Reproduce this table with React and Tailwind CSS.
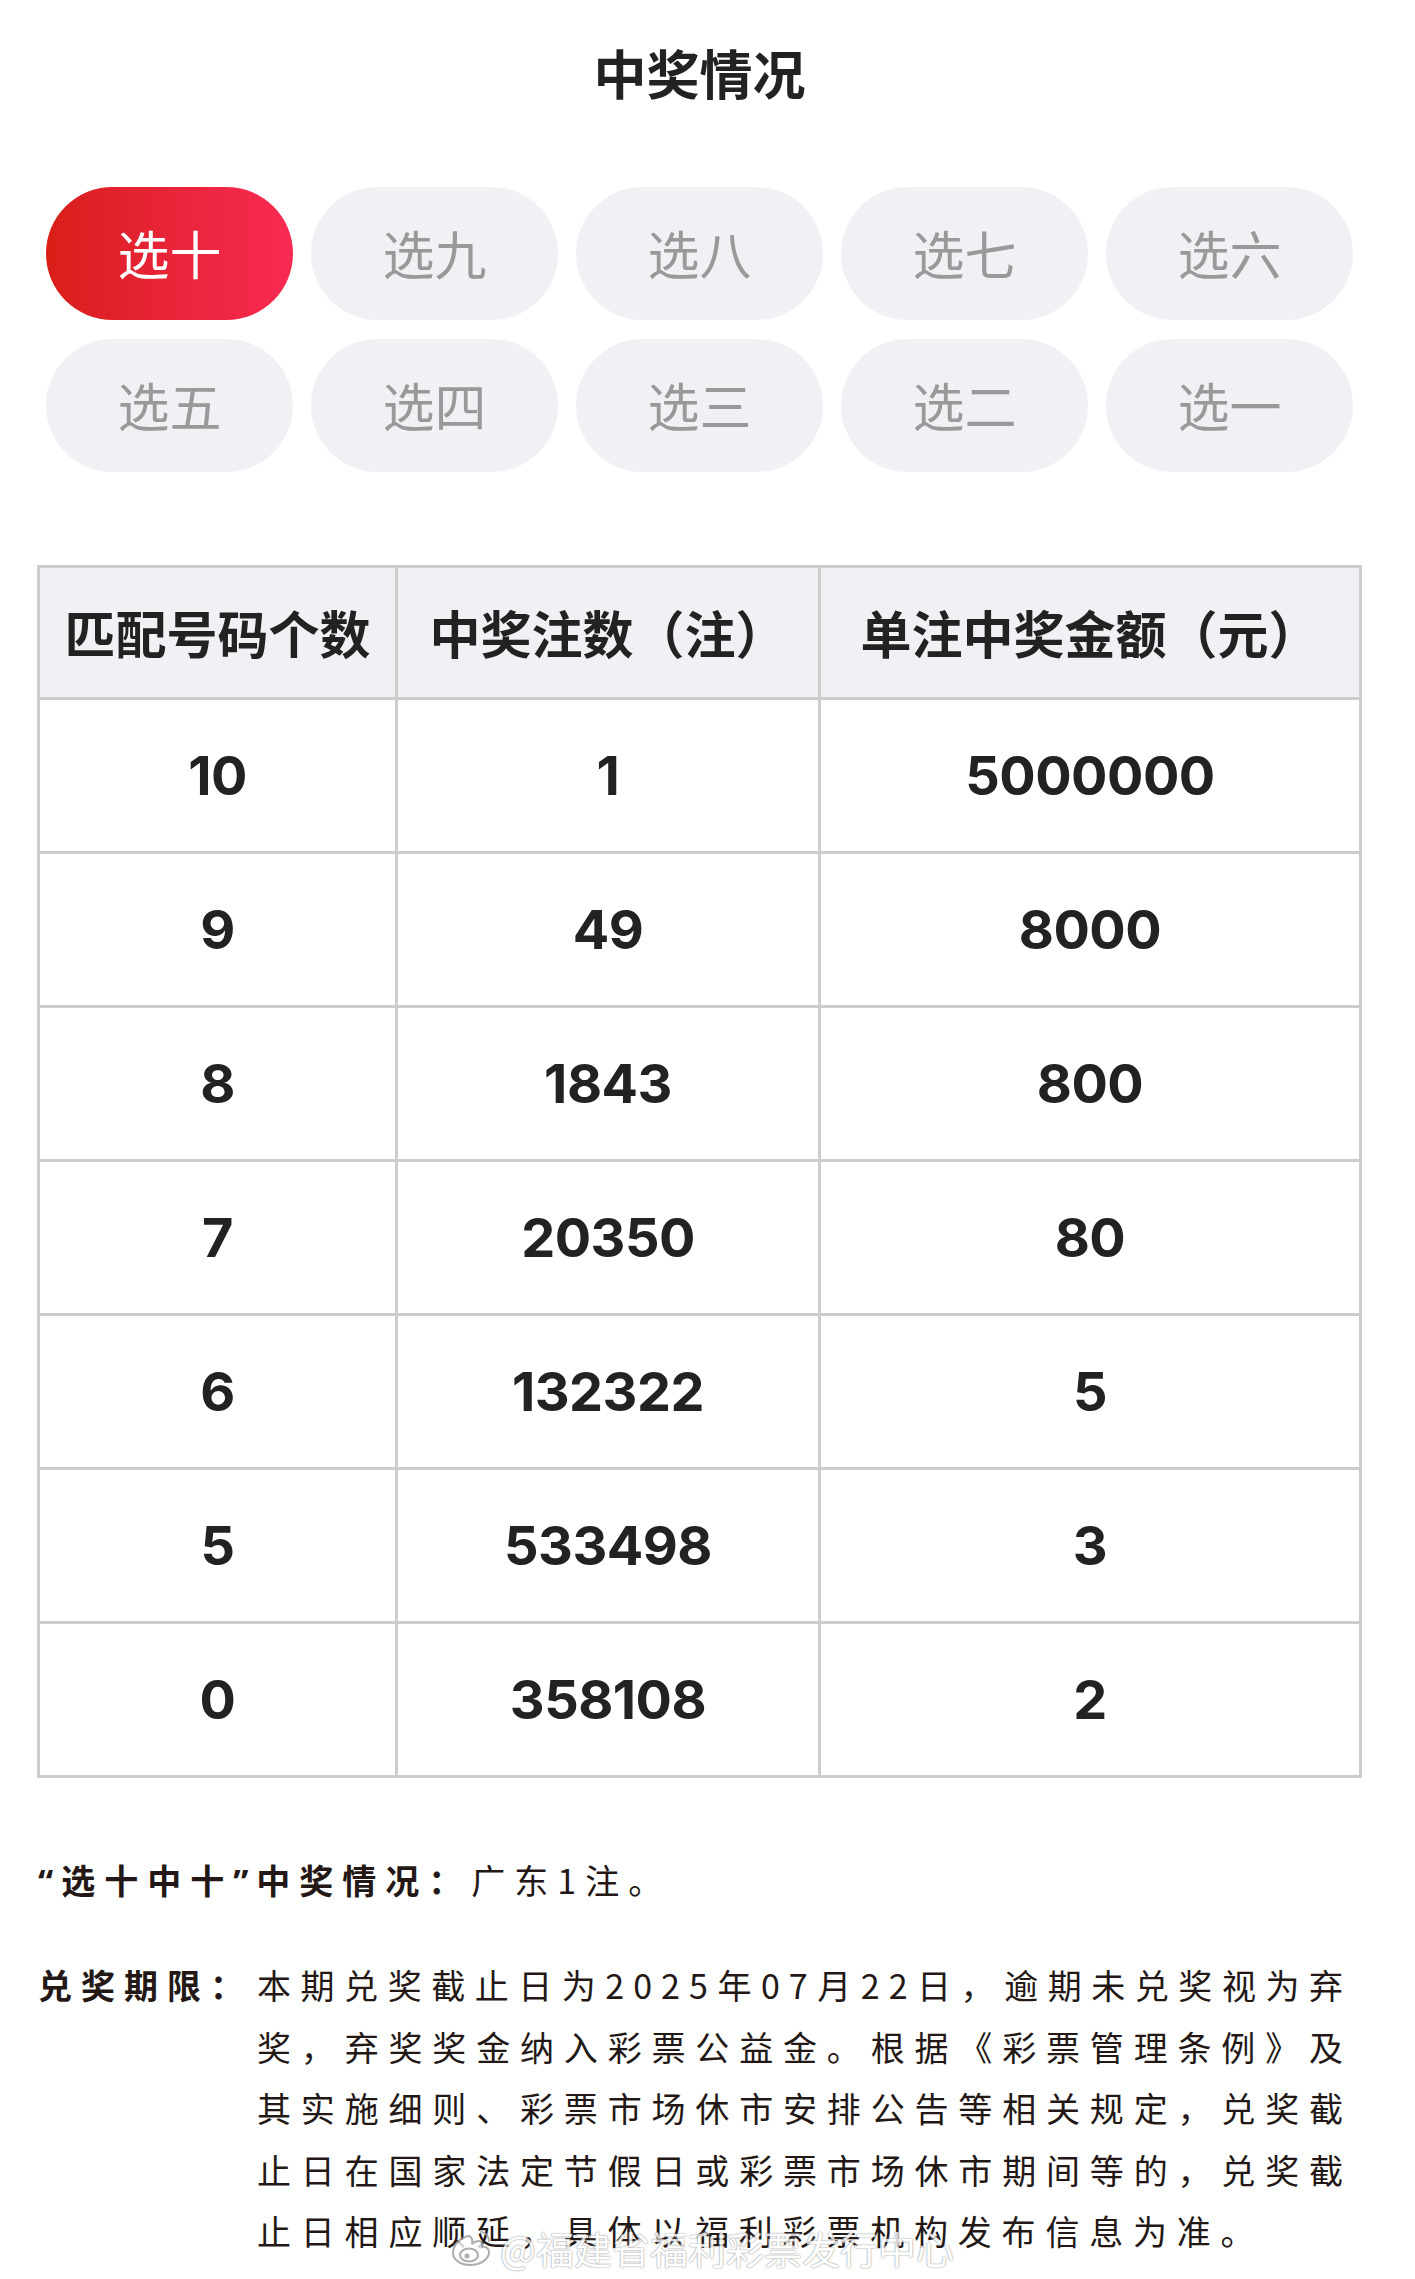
import React from "react";

const tabs = ["选十", "选九", "选八", "选七", "选六", "选五", "选四", "选三", "选二", "选一"];
const rows = [
  ["10", "1", "5000000"],
  ["9", "49", "8000"],
  ["8", "1843", "800"],
  ["7", "20350", "80"],
  ["6", "132322", "5"],
  ["5", "533498", "3"],
  ["0", "358108", "2"],
];

const cjk = "font-['Noto_Sans_CJK_SC','Noto_Sans',sans-serif]";

export default function App() {
  return (
    <div className={`relative w-[1415px] min-h-[2279px] bg-white text-[#222] ${cjk}`}>
      <div className="w-[1399px]">
        <div className="pt-[44px] text-center text-[53px] leading-[56px] font-bold text-[#222]">中奖情况</div>

        <div className="ml-[46px] mt-[87px] grid w-[1307px] grid-cols-5 gap-x-[18px] gap-y-[19px]">
          {tabs.map((t, i) => (
            <div
              key={t}
              className={
                i === 0
                  ? "flex h-[133px] items-center justify-center rounded-full bg-gradient-to-r from-[#d81e16] to-[#f92a52] pb-[2px] text-[52px] text-white"
                  : "flex h-[133px] items-center justify-center rounded-full bg-[#f1f1f5] pb-[2px] text-[52px] text-[#999999]"
              }
            >
              {t}
            </div>
          ))}
        </div>

        <div className="ml-[37px] mt-[93px] grid w-[1325px] grid-cols-[355px_420px_538px] gap-[3px] bg-[#cdcdcd] p-[3px]">
          {["匹配号码个数", "中奖注数（注）", "单注中奖金额（元）"].map((h) => (
            <div key={h} className="flex h-[129px] items-center justify-center bg-[#f1f1f5] text-[51px] font-bold text-[#222]">
              {h}
            </div>
          ))}
          {rows.map((r) =>
            r.map((c, j) => (
              <div
                key={r[0] + "-" + j}
                className="flex h-[151px] items-center justify-center bg-white font-['Inter',sans-serif] text-[54px] font-bold tracking-[-0.5px] text-[#222]"
              >
                {c}
              </div>
            ))
          )}
        </div>

        <div className="ml-[38px] mt-[71px] text-[34px] leading-[61px] tracking-[9px] text-[#231815]">
          <span className="font-bold">
            <span className="font-['Noto_Sans',sans-serif] tracking-[8px]">“</span>选十中十<span className="font-['Noto_Sans',sans-serif] tracking-[8px]">”</span>中奖情况：
          </span>
          <span>广东1注。</span>
        </div>

        <div className="ml-[38px] mt-[42px] flex text-[34px] leading-[61.5px] text-[#231815]">
          <div className="w-[219px] shrink-0 font-bold tracking-[9px]">兑奖期限：</div>
          <div className="w-[1095px] tracking-[9px]">
            <div className="whitespace-nowrap text-justify [text-align-last:justify]">本期兑奖截止日为2025年07月22日，逾期未兑奖视为弃</div>
            <div className="whitespace-nowrap text-justify [text-align-last:justify]">奖，弃奖奖金纳入彩票公益金。根据《彩票管理条例》及</div>
            <div className="whitespace-nowrap text-justify [text-align-last:justify]">其实施细则、彩票市场休市安排公告等相关规定，兑奖截</div>
            <div className="whitespace-nowrap text-justify [text-align-last:justify]">止日在国家法定节假日或彩票市场休市期间等的，兑奖截</div>
            <div className="whitespace-nowrap tracking-[9.8px]">止日相应顺延，具体以福利彩票机构发布信息为准。</div>
          </div>
        </div>
      </div>

      <div className="absolute left-[450px] top-[2226px] flex items-center gap-[6px] opacity-80">
        <svg width="44" height="40" viewBox="0 0 44 40" fill="none">
          <path
            d="M18 8c-8 2-15 9-15 17 0 7 8 12 17 12 11 0 19-6 19-13 0-4-4-6-7-5 1-3 0-6-3-6-3 0-6 2-7 3 1-3 0-8-4-8z"
            fill="white"
            stroke="#9a9a9a"
            strokeWidth="2"
          />
          <ellipse cx="19" cy="27" rx="9" ry="6.5" fill="white" stroke="#9a9a9a" strokeWidth="2" />
          <circle cx="17" cy="28" r="2.5" fill="#9a9a9a" />
          <path d="M31 4c4 0 8 4 8 9" stroke="#9a9a9a" strokeWidth="2" strokeLinecap="round" />
        </svg>
        <span className="text-[38px] leading-[44px] text-white [text-shadow:0_0_1px_#8a8a8a,0_0_2px_#8a8a8a]">@福建省福利彩票发行中心</span>
      </div>
    </div>
  );
}
